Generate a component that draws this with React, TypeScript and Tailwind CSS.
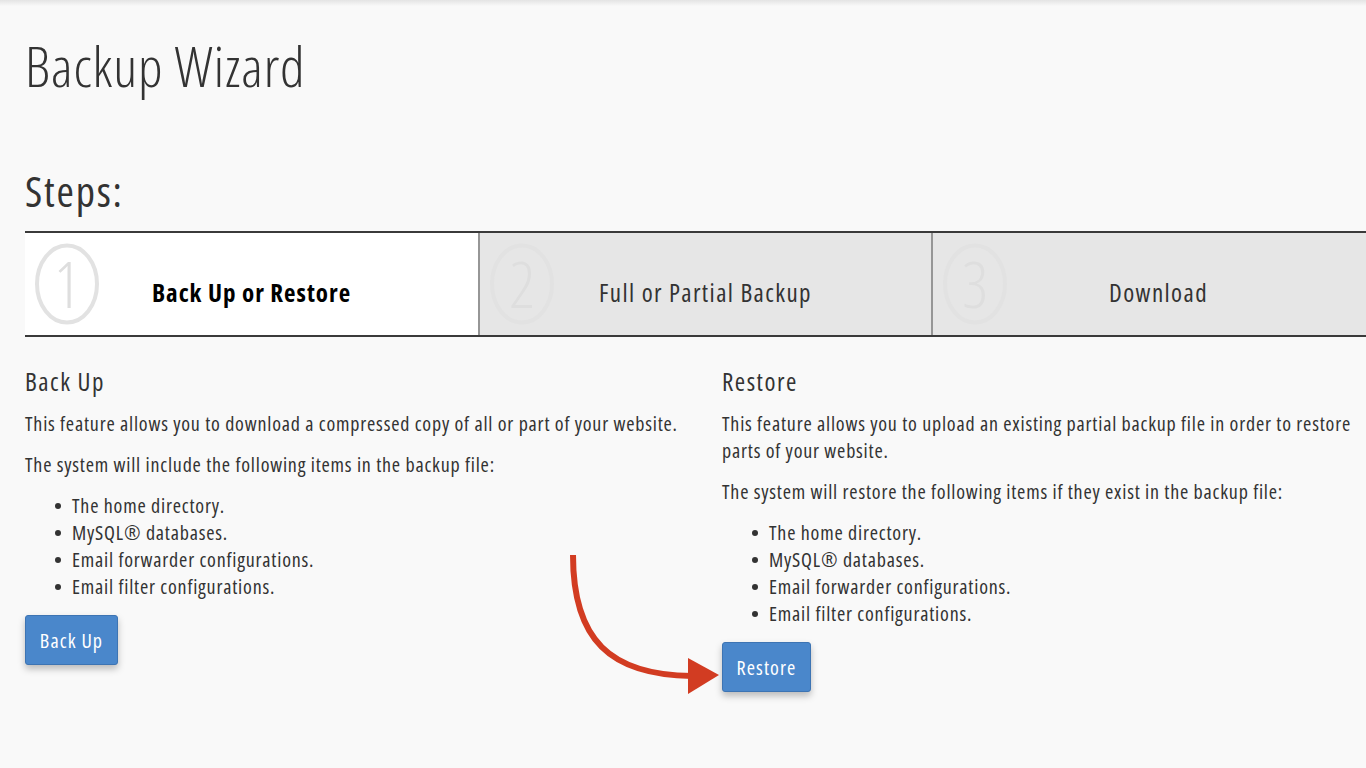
import React from "react";

const font = "font-['Open_Sans','Liberation_Sans',sans-serif] [font-stretch:75%]";

function StepCircle({ n }: { n: number }) {
  return (
    <div className="relative h-[84px] w-[66px] shrink-0">
      <svg width="66" height="84" viewBox="0 0 66 84" className="absolute inset-0">
        <ellipse cx="33" cy="42" rx="30" ry="38.5" fill="none" stroke="#e2e2e2" strokeWidth="4" />
      </svg>
      <span className="absolute inset-0 flex items-center justify-center text-[64px] font-light leading-[84px] text-[#dedede]">
        {n}
      </span>
    </div>
  );
}

function Step({ n, label, active, first }: { n: number; label: string; active?: boolean; first?: boolean }) {
  return (
    <div
      className={`relative flex h-full w-[453px] shrink-0 items-center pl-[9px] ${
        active ? "bg-white" : "bg-[#e6e6e6]"
      } ${first ? "" : "border-l-2 border-[#969696]"}`}
    >
      <StepCircle n={n} />
      <div
        className={`absolute inset-x-0 top-[43px] text-center text-[25px] leading-[32px] ${
          active ? "font-bold tracking-[1px] text-black" : "font-normal tracking-[1.4px] text-[#333]"
        }`}
      >
        {label}
      </div>
    </div>
  );
}

function Bullets({ items }: { items: string[] }) {
  return (
    <ul className="mt-[14px] pl-[47px]">
      {items.map((t) => (
        <li key={t} className="relative leading-[27px]">
          <span className="absolute -left-[17px] top-[11px] h-[6px] w-[6px] rounded-full bg-[#333]" />
          {t}
        </li>
      ))}
    </ul>
  );
}

const items = [
  "The home directory.",
  "MySQL® databases.",
  "Email forwarder configurations.",
  "Email filter configurations.",
];

export default function App() {
  return (
    <div className={`relative min-h-[768px] w-full overflow-hidden bg-[#f9f9f9] text-[#333] ${font}`}>
      <div className="h-[6px] w-full bg-gradient-to-b from-[#e4e4e4] to-[#f9f9f9]" />
      <div className="pl-[25px]">
        <h1 className="mt-[26px] text-[56px] font-light leading-[67px] tracking-[0.9px] text-[#333]">Backup Wizard</h1>
        <h2 className="mt-[67px] text-[42px] font-normal leading-[50px] tracking-[1.8px] text-[#333]">Steps:</h2>
        <div className="mt-[15px] flex h-[106px] w-[1360px] border-y-2 border-[#3a3a3a]">
          <Step n={1} label="Back Up or Restore" active first />
          <Step n={2} label="Full or Partial Backup" />
          <Step n={3} label="Download" />
        </div>

        <div className="mt-[29px] grid grid-cols-[697px_1fr] text-[20px] leading-[27px] tracking-[0.8px]">
          <div>
            <h3 className="text-[25px] leading-[30px] tracking-[1.5px] text-[#333]">Back Up</h3>
            <p className="mt-[14px]">This feature allows you to download a compressed copy of all or part of your website.</p>
            <p className="mt-[14px]">The system will include the following items in the backup file:</p>
            <Bullets items={items} />
            <button className="mt-[15px] h-[50px] w-[93px] rounded-[3px] border border-[#3d74b3] bg-[#4a87cb] text-[20px] tracking-[1.1px] text-white shadow-[0_4px_7px_rgba(0,0,0,0.25)]">
              Back Up
            </button>
          </div>
          <div>
            <h3 className="text-[25px] leading-[30px] tracking-[1.5px] text-[#333]">Restore</h3>
            <p className="mt-[14px] whitespace-nowrap">
              This feature allows you to upload an existing partial backup file in order to restore
              <br />
              parts of your website.
            </p>
            <p className="mt-[14px]">The system will restore the following items if they exist in the backup file:</p>
            <Bullets items={items} />
            <button className="mt-[15px] h-[50px] w-[89px] rounded-[3px] border border-[#3d74b3] bg-[#4a87cb] text-[20px] tracking-[1.1px] text-white shadow-[0_4px_7px_rgba(0,0,0,0.25)]">
              Restore
            </button>
          </div>
        </div>
      </div>

      <svg className="pointer-events-none absolute left-0 top-0" width="1366" height="768" viewBox="0 0 1366 768">
        <path d="M573 555 C 573 640, 610 675, 692 676" fill="none" stroke="#d23c22" strokeWidth="6" />
        <polygon points="688,658 719,675 688,694" fill="#d23c22" />
      </svg>
    </div>
  );
}
